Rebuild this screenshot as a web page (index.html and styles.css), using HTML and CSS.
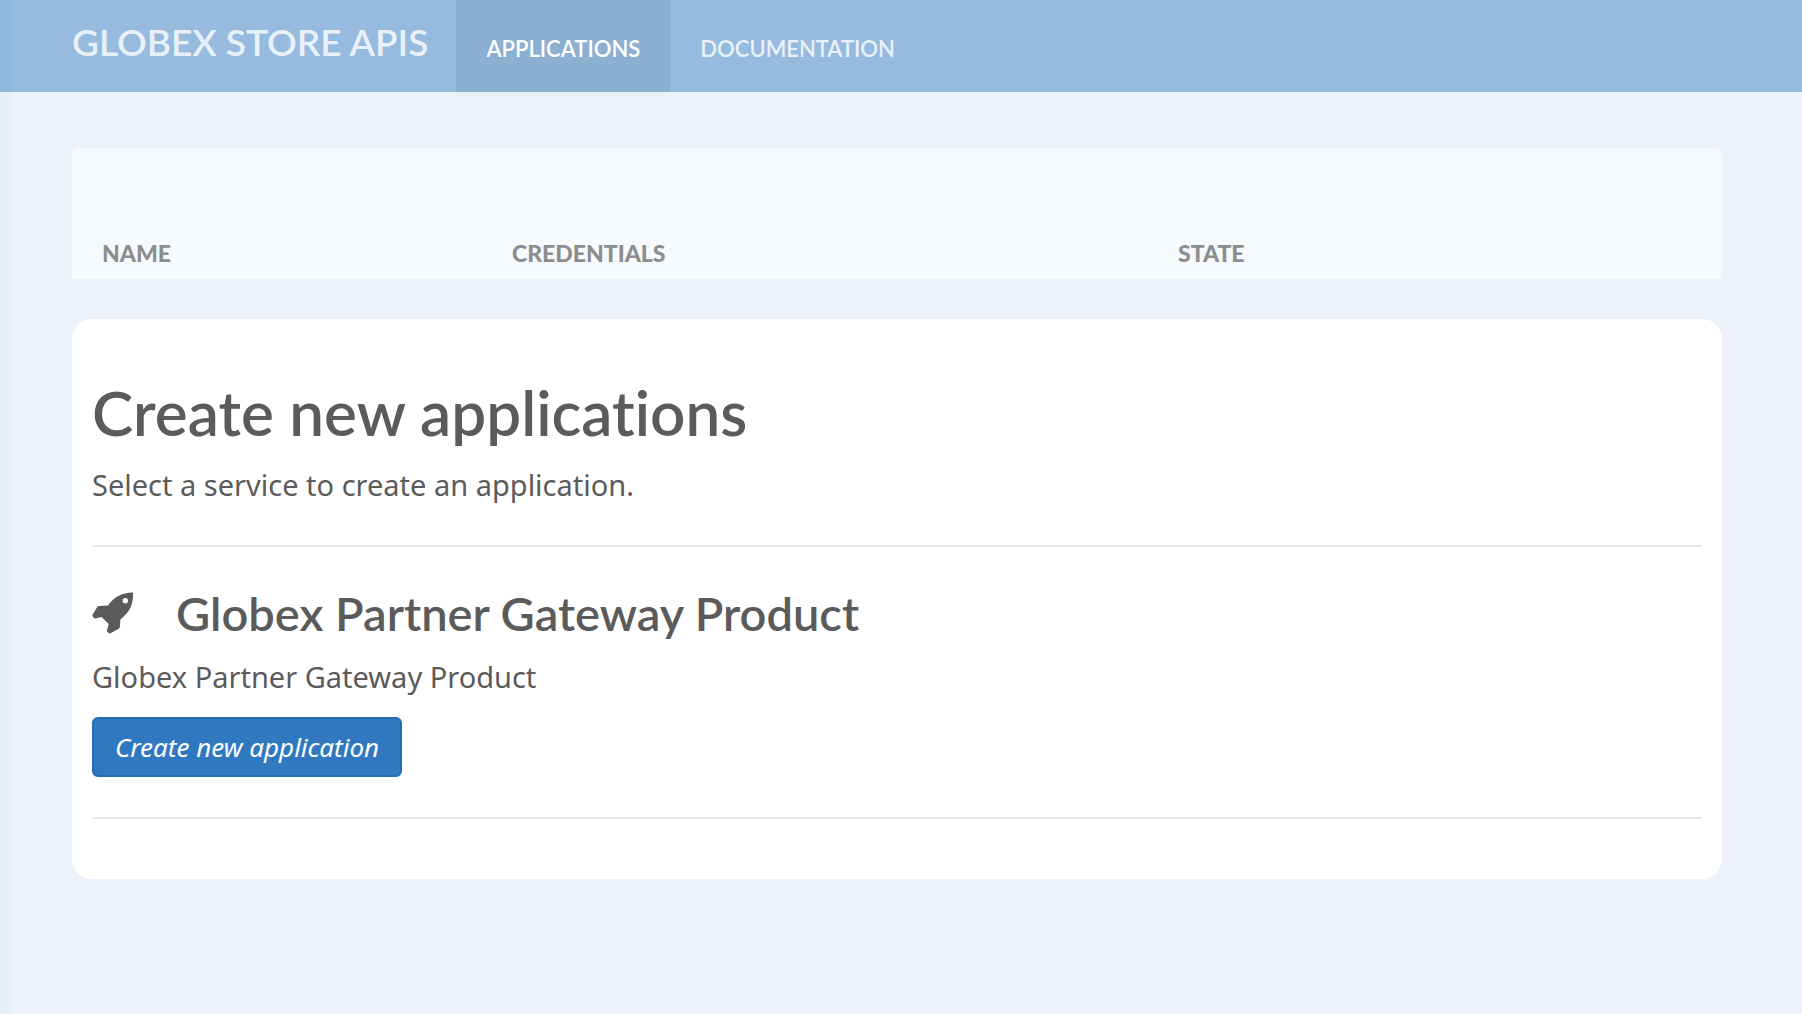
FILE: index.html
```html
<!DOCTYPE html>
<html lang="en">
<head>
<meta charset="utf-8">
<title>Globex Store APIs</title>
<link rel="stylesheet" href="styles.css">
</head>
<body>
<header class="topbar">
  <a class="brand" href="#">GLOBEX STORE APIS</a>
  <nav class="nav">
    <a class="nav-link active" href="#" aria-current="page">APPLICATIONS</a>
    <a class="nav-link" href="#">DOCUMENTATION</a>
  </nav>
</header>
<main class="page">
  <table class="apps">
    <thead>
      <tr>
        <th class="col-name" scope="col">NAME</th>
        <th class="col-credentials" scope="col">CREDENTIALS</th>
        <th scope="col">STATE</th>
      </tr>
    </thead>
  </table>
  <section class="card">
    <h1 class="title">Create new applications</h1>
    <p class="text">Select a service to create an application.</p>
    <hr class="rule">
    <article class="service">
      <h2 class="service-title">
        <svg class="rocket" viewBox="0 0 42 42" aria-hidden="true">
          <path fill-rule="evenodd" d="M41 .5C41.5 11 38.500 20 28.300 27.500L28 34.500Q28 36 26.700 36.800L18.500 41.300Q17.300 41.800 16.300 40.800L15.200 39.500Q14.800 39 15 38.200L16.800 32L9.500 25L3.300 26.500Q2.600 26.600 2 26L.8 24.600Q0 23.700 .6 22.700L5.200 15Q5.800 14 7 14L16 13.400C22 5 29 1 41 .5ZM33.300 6A2.700 2.700 0 1 0 33.300 11.400A2.700 2.700 0 1 0 33.300 6Z"/>
        </svg>
        Globex Partner Gateway Product
      </h2>
      <p class="text">Globex Partner Gateway Product</p>
      <button class="button" type="button">Create new application</button>
    </article>
    <hr class="rule">
  </section>
</main>
</body>
</html>
```
FILE: styles.css
```css
* {
  box-sizing: border-box;
}

body {
  margin: 0;
  background: #edf2fa;
  color: #5b5b5b;
  font-family: "Noto Sans", sans-serif;
}

.topbar {
  display: flex;
  height: 92px;
  padding-left: 60px;
  border-left: 12px solid #8fb8de;
  background: #96bbdf;
  font-family: Lato, sans-serif;
  font-weight: 600;
}

.brand {
  padding: 18px 28px 0 0;
  color: #e8f1f9;
  font-size: 37px;
  line-height: 48px;
  text-decoration: none;
  white-space: nowrap;
}

.nav {
  display: flex;
}

.nav-link {
  display: flex;
  align-items: center;
  padding: 4px 30px 0;
  color: #e8f1f9;
  font-size: 22px;
  text-decoration: none;
}

.nav-link.active {
  background: #8bb0d1;
  color: #fff;
}

.page {
  min-height: calc(100vh - 92px);
  padding: 56px 80px 56px 60px;
  border-left: 12px solid #e7f0f7;
}

.apps {
  width: 100%;
  height: 131px;
  border-spacing: 0;
  border-radius: 6px 6px 0 0;
  background: #f6fafd;
  table-layout: fixed;
}

.apps th {
  padding: 0 30px 11px;
  color: #8c8d8e;
  font-family: Lato, sans-serif;
  font-size: 23px;
  font-weight: 900;
  line-height: 30px;
  text-align: left;
  vertical-align: bottom;
}

.col-name {
  width: 410px;
}

.col-credentials {
  width: 666px;
}

.card {
  margin-top: 40px;
  padding: 53px 20px 20px;
  border-radius: 20px;
  background: #fff;
}

.title,
.service-title {
  margin: 0;
  font-family: Lato, sans-serif;
  font-variant-ligatures: none;
  font-weight: 600;
}

.title {
  margin-bottom: 13px;
  font-size: 62px;
  line-height: 80px;
}

.text {
  margin: 10px 0;
  font-size: 29px;
  line-height: 40px;
}

.rule {
  height: 2px;
  margin: 40px 0;
  border: 0;
  background: #e9e9e9;
}

.service-title {
  display: flex;
  align-items: center;
  gap: 42px;
  margin-bottom: 18px;
  font-size: 47px;
  line-height: 52px;
}

.rocket {
  width: 42px;
  height: 42px;
  fill: #5b5b5b;
}

.button {
  display: block;
  height: 60px;
  margin-top: 20px;
  padding: 0 21px;
  border: 2px solid #266cb3;
  border-radius: 6px;
  background: #3079c1;
  color: #fff;
  font-family: "Noto Sans", sans-serif;
  font-size: 26px;
  font-style: italic;
}
```
